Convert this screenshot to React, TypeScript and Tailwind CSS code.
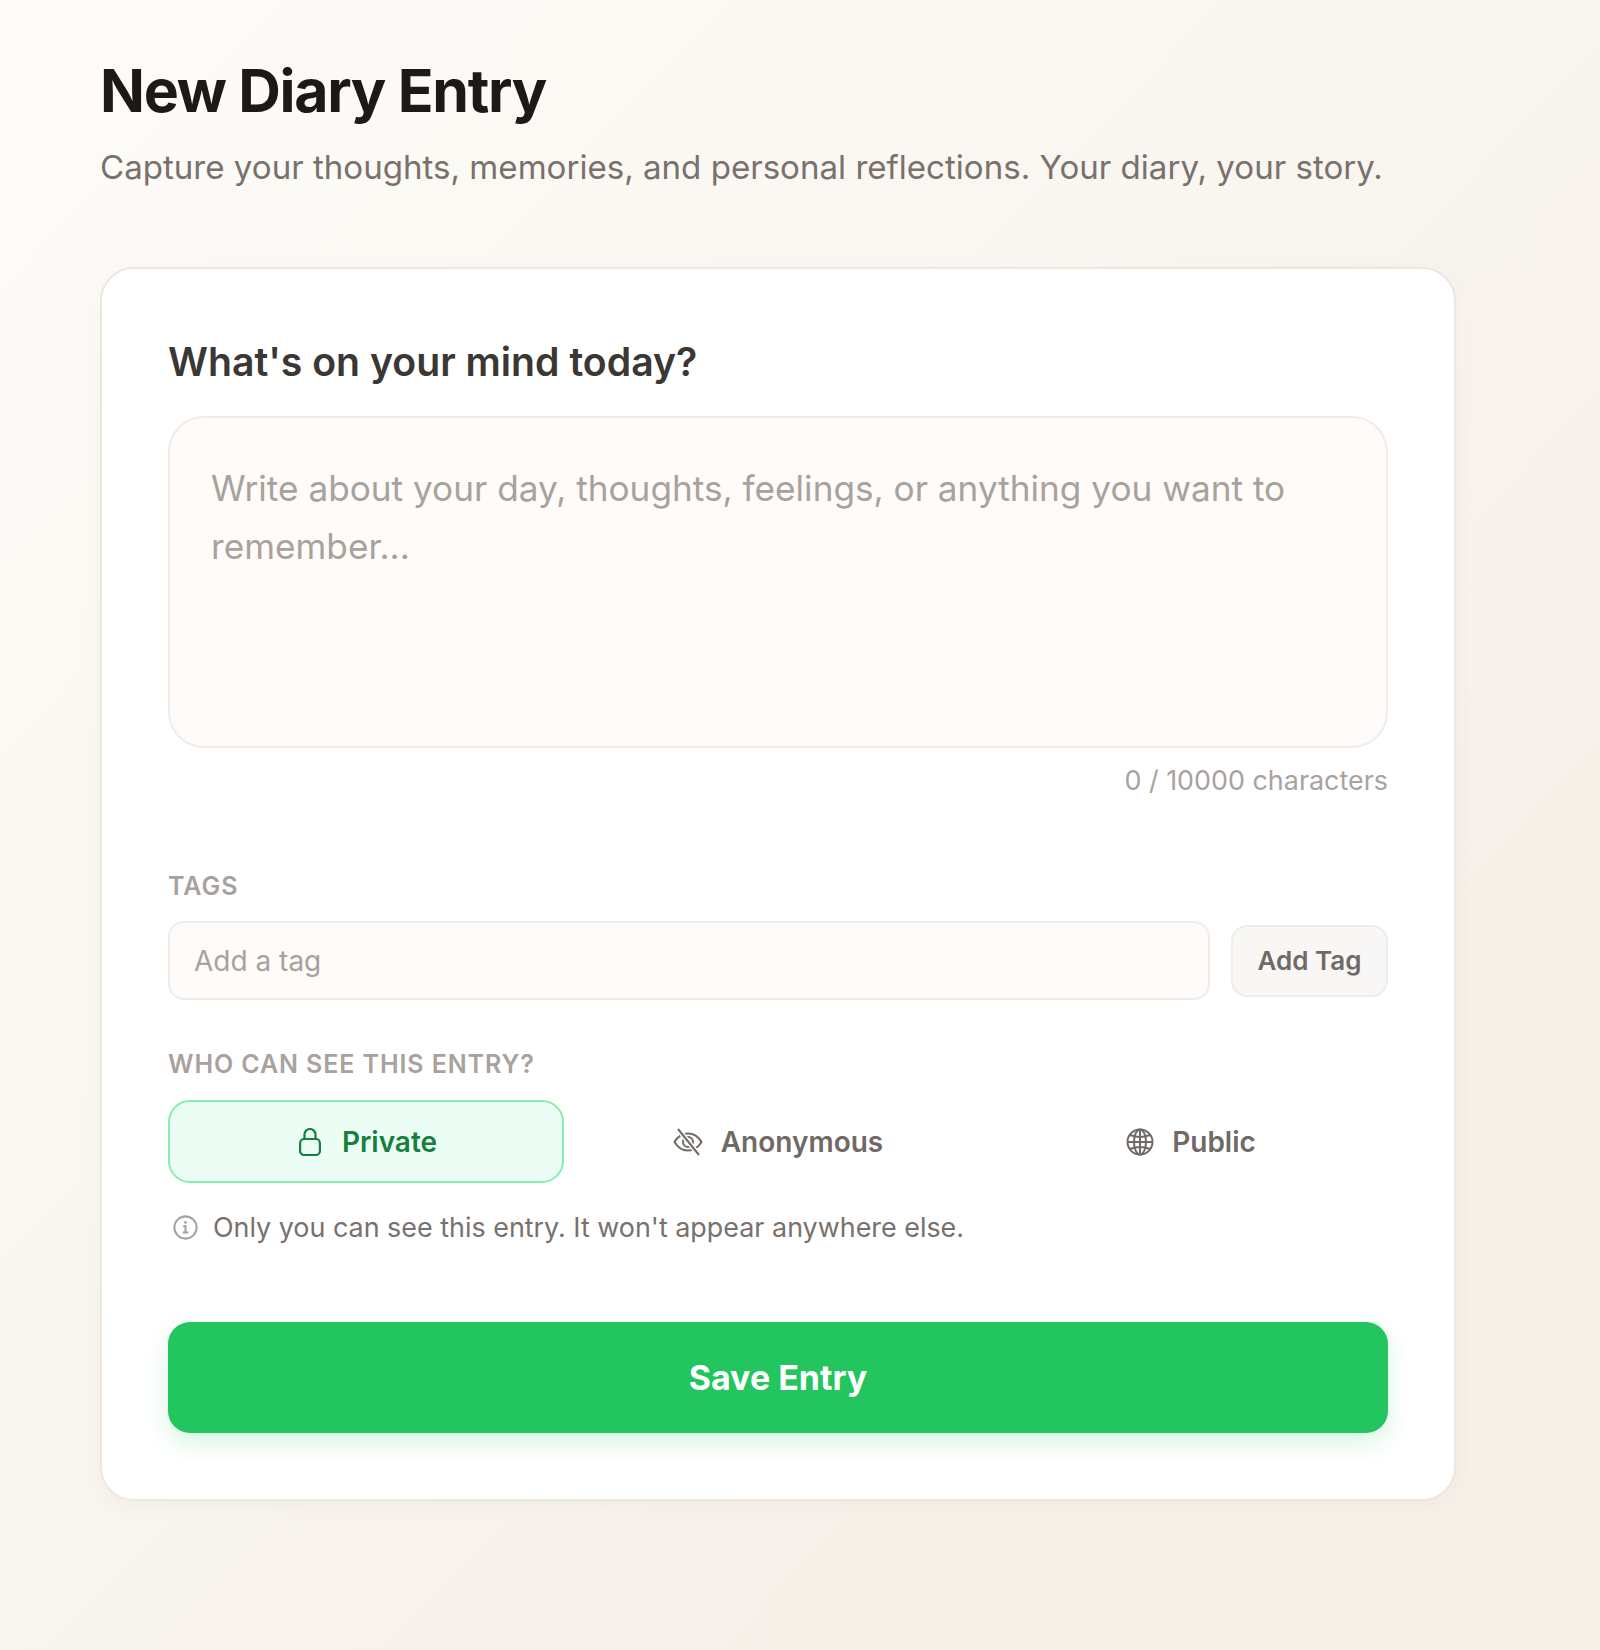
const App = () => {
  return (
    <div className="min-h-[1650px] bg-linear-to-br from-[#fdfcf8] via-[#fbf8f3] via-30% to-[#f6f0e9] to-75% px-[100px] pt-[53px] font-['Inter',sans-serif]">
      {/* Header */}
      <h1 className="text-[59px] leading-[76px] font-bold tracking-[-1.3px] text-[#1c1917]">New Diary Entry</h1>
      <p className="mt-[15px] text-[33.1px] leading-[46px] text-[#78716c]">
        Capture your thoughts, memories, and personal reflections. Your diary, your story.
      </p>

      {/* Card */}
      <div className="mt-[77px] w-[1356px] rounded-[34px] border-2 border-[#ebe7e1] bg-white px-[66px] pt-[65px] pb-[66px] shadow-[0_4px_20px_rgba(120,100,70,0.05)]">
        <h2 className="text-[39.2px] leading-[56px] font-semibold text-[#3a3735]">What's on your mind today?</h2>
        <div className="mt-[26px] h-[332px] rounded-[36px] border-2 border-[#efecea] bg-[#fefbf8] px-[41px] pt-[41px] text-[35.2px] leading-[58px] text-[#a8a29e]">
          Write about your day, thoughts, feelings, or anything you want to remember...
        </div>
        <div className="mt-[14px] text-right text-[26.9px] leading-[36px] text-[#a8a29e]">0 / 10000 characters</div>

        {/* Tags */}
        <div className="mt-[71px] text-[25px] leading-[34px] font-semibold tracking-[1px] text-[#a8a29e]">TAGS</div>
        <div className="mt-[18px] flex items-center gap-[21px]">
          <div className="flex h-[79px] flex-1 items-center rounded-[16px] border-2 border-[#efecea] bg-[#fefbf8] px-[24px] text-[28px] text-[#a8a29e]">
            Add a tag
          </div>
          <button className="h-[72px] w-[157px] rounded-[16px] border-2 border-[#efecea] bg-[#f8f7f5] text-[26px] font-semibold text-[#6f6a65]">
            Add Tag
          </button>
        </div>

        {/* Visibility */}
        <div className="mt-[47px] text-[25px] leading-[34px] font-semibold tracking-[0.9px] text-[#a8a29e]">WHO CAN SEE THIS ENTRY?</div>
        <div className="mt-[19px] grid grid-cols-3 gap-[16px]">
          <button className="flex h-[83px] items-center justify-center gap-[21px] rounded-[22px] border-[2.5px] border-[#86efac] bg-[#ecfdf5] pl-[4px] text-[28px] font-semibold text-[#15803d]">
            <svg width="22" height="28" viewBox="0 0 22 28" fill="none" stroke="currentColor" strokeWidth="2.2">
              <rect x="1.1" y="11" width="19.8" height="16" rx="4" />
              <path d="M5.5 11V6.5a5.5 5.5 0 0 1 11 0V11" />
            </svg>
            Private
          </button>
          <button className="flex h-[83px] items-center justify-center gap-[18px] rounded-[22px] text-[28px] font-semibold text-[#6f6a65]">
            <svg width="30" height="28" viewBox="0 0 30 28" fill="none" stroke="currentColor" strokeWidth="2">
              <path d="M1.5 14C5 8 10 5.5 15 5.5S25 8 28.5 14C25 20 20 22.500 15 22.500S5 20 1.500 14z" />
              <circle cx="15" cy="14" r="5" />
              <path d="M5 1l21 26" stroke="#ffffff" strokeWidth="5" />
              <path d="M5 1l21 26" />
            </svg>
            Anonymous
          </button>
          <button className="flex h-[83px] items-center justify-center gap-[18px] rounded-[22px] pl-[2px] text-[28px] font-semibold text-[#6f6a65]">
            <svg width="28" height="28" viewBox="0 0 28 28" fill="none" stroke="currentColor" strokeWidth="2">
              <circle cx="14" cy="14" r="12.500" />
              <ellipse cx="14" cy="14" rx="6" ry="12.500" />
              <path d="M14 1.500v25M1.500 14h25M4 7c6 2.500 14 2.500 20 0M4 21c6-2.500 14-2.500 20 0" />
            </svg>
            Public
          </button>
        </div>
        <div className="mt-[26px] flex items-center gap-[15px] pl-[5px] text-[26.9px] leading-[36px] text-[#78716c]">
          <svg width="25" height="25" viewBox="0 0 27 27" fill="none" stroke="#a8a29e" strokeWidth="2.200">
            <circle cx="13.500" cy="13.500" r="12" />
            <circle cx="13.500" cy="8" r="1.500" fill="#a8a29e" stroke="none" />
            <path d="M11 12h2.500v7M10.500 19h6" />
          </svg>
          Only you can see this entry. It won't appear anywhere else.
        </div>

        <button className="mt-[77px] h-[111px] w-full rounded-[22px] bg-[#22c55e] text-[34px] font-bold text-white shadow-[0_10px_24px_rgba(34,197,94,0.18)]">
          Save Entry
        </button>
      </div>
    </div>
  );
};

export default App;
